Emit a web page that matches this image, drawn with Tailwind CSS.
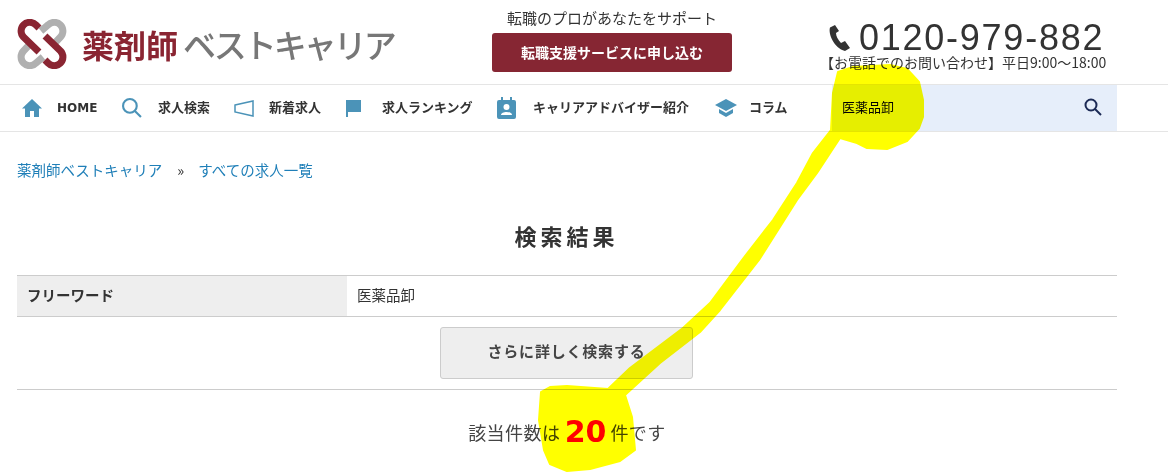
<!DOCTYPE html>
<html lang="ja">
<head>
    <meta charset="UTF-8">
    <title>薬剤師ベストキャリア</title>
    <script src="https://cdn.jsdelivr.net/npm/@tailwindcss/browser@4"></script>
</head>
<body class="relative h-[473px] overflow-hidden bg-white text-[#333] font-['DejaVu_Sans','Noto_Sans_CJK_JP',sans-serif]">
    <!-- Header -->
    <header class="h-[85px] border-b border-[#e5e5e5] flex font-['Noto_Sans_CJK_JP',sans-serif]">
        <div class="w-[430px] pl-[17px] pt-[19px] flex items-start">
            <svg class="w-[50px] h-[50px] shrink-0" viewBox="0 0 50 50" fill="none" stroke-width="7">
                <path d="M24 12 L31 6 A8.500 8.500 0 0 1 43.500 18 L36 26" stroke="#b0b0b0"/>
                <path d="M14 24 L6.500 32 A8.500 8.500 0 0 0 19 44 L26 38" stroke="#b0b0b0"/>
                <path d="M22 9 L19 6 A8.500 8.500 0 0 0 6.500 18 L22 33" stroke="#8a2532"/>
                <path d="M28 41 L31 44 A8.500 8.500 0 0 0 43.500 32 L28 17" stroke="#8a2532"/>
            </svg>
            <div class="ml-[15px] flex items-center h-[50px] leading-none font-bold whitespace-nowrap">
                <span class="text-[32px] text-[#8a2532]">薬剤師</span><span class="ml-[5px] text-[33px] tracking-[-3px] font-medium text-[#777]">ベストキャリア</span>
            </div>
        </div>
        <div class="w-[392px] flex flex-col items-center -ml-[14px] pt-[9px]">
            <p class="text-[15px] leading-[18px] text-[#333]">転職のプロがあなたをサポート</p>
            <a class="mt-[6px] w-[240px] h-[39px] rounded-[3px] bg-[#862633] text-white text-[14px] font-bold flex items-center justify-center">転職支援サービスに申し込む</a>
        </div>
        <div class="flex-1 pl-[16px] pt-[20px]">
            <div class="flex items-center h-[36px]">
                <svg class="w-[24px] h-[28px] ml-[4px]" viewBox="0 0 24 28" fill="#333"><path d="M7 1 L2 3.500 C0 10 6 24 17 27 L22 24 L17 17 L13 19 C10 16 8 12 8 9 L11 7 Z"/></svg>
                <span class="ml-[7px] text-[36px] leading-none tracking-[1.750px] text-[#333] font-['Liberation_Sans',sans-serif]">0120-979-882</span>
            </div>
            <p class="-mt-[2px] text-[14px] leading-[16px] text-[#333] whitespace-nowrap -ml-[4px]">【お電話でのお問い合わせ】平日9:00～18:00</p>
        </div>
    </header>

    <!-- Nav -->
    <nav class="h-[47px] border-b border-[#e5e5e5] pl-[17px] flex items-center text-[13px] font-bold text-[#333] whitespace-nowrap font-['Noto_Sans_CJK_JP',sans-serif]">
        <div class="flex items-center w-[815px] h-full">
            <div class="flex items-center w-[104px]">
                <svg class="w-[20px] h-[18px] ml-[5px]" viewBox="0 0 20 18" fill="#4b93b8"><path d="M10 0 L20 9.500 H17 V18 H12 V12 H8 V18 H3 V9.500 H0 Z"/></svg>
                <span class="ml-[15px] text-[12px] font-['DejaVu_Sans',sans-serif]">HOME</span>
            </div>
            <div class="flex items-center w-[112px]">
                <svg class="w-[20px] h-[20px] ml-[1px]" viewBox="0 0 19 19" fill="none" stroke="#4b93b8" stroke-width="2"><circle cx="7.500" cy="7.500" r="6.500"/><path d="M12 12 L18 18"/></svg>
                <span class="ml-[16px] mb-[2px]">求人検索</span>
            </div>
            <div class="flex items-center w-[113px]">
                <svg class="w-[20px] h-[17px] ml-[1px]" viewBox="0 0 20 17" fill="none" stroke="#4b93b8" stroke-width="1.500"><path d="M1 5 L19 1 V16 L1 12 Z"/></svg>
                <span class="ml-[15px] mb-[2px]">新着求人</span>
            </div>
            <div class="flex items-center w-[151px]">
                <svg class="w-[16px] h-[17px]" viewBox="0 0 16 17" fill="#4b93b8"><path d="M0 0 H15 V12 H2 V17 H0 Z"/></svg>
                <span class="ml-[20px] mb-[2px]">求人ランキング</span>
            </div>
            <div class="flex items-center w-[218px]">
                <svg class="w-[19px] h-[22px]" viewBox="0 0 19 22"><path fill="#4b93b8" d="M2 3 H4 V0 H6 V3 H13 V0 H15 V3 H17 A2 2 0 0 1 19 5 V20 A2 2 0 0 1 17 22 H2 A2 2 0 0 1 0 20 V5 A2 2 0 0 1 2 3 Z"/><circle cx="9.500" cy="10" r="3" fill="#fff"/><path fill="#fff" d="M4 18 C4 14 15 14 15 18 Z"/></svg>
                <span class="ml-[17px] mb-[2px]">キャリアアドバイザー紹介</span>
            </div>
            <div class="flex items-center">
                <svg class="w-[22px] h-[18px]" viewBox="0 0 22 18" fill="#4b93b8"><path d="M11 0 L22 6 L11 12 L0 6 Z"/><path d="M4 10 L11 14 L18 10 V14 L11 18 L4 14 Z"/></svg>
                <span class="ml-[12px] mb-[2px]">コラム</span>
            </div>
        </div>
        <div class="w-[285px] h-full bg-[#e6eefa] flex items-center justify-between pl-[10px] pr-[15px] font-normal text-black">
            <span class="mb-[2px]">医薬品卸</span>
            <svg class="w-[18px] h-[18px] mb-[2px]" viewBox="0 0 18 18" fill="none" stroke="#1c2a55" stroke-width="2"><circle cx="7" cy="7" r="5.500"/><path d="M11 11 L17 17"/></svg>
        </div>
    </nav>

    <!-- Main -->
    <main class="px-[17px] w-[1134px]">
        <div class="pt-[28px] flex text-[14.500px] leading-[20px] text-[#1f7fb8] font-['Noto_Sans_CJK_JP',sans-serif]">
            <a>薬剤師ベストキャリア</a><span class="ml-[15px] mr-[14px] text-[#333]">»</span><a>すべての求人一覧</a>
        </div>
        <h1 class="mt-[40px] -ml-[1px] text-center text-[22px] leading-[30px] font-bold tracking-[4px] text-[#333] font-['Noto_Sans_CJK_JP',sans-serif]">検索結果</h1>
        <div class="mt-[25px] flex h-[42px] border-y border-[#ccc] text-[14.500px] font-['Noto_Sans_CJK_JP',sans-serif]">
            <div class="w-[330px] bg-[#eee] pl-[10px] pb-[2px] flex items-center font-bold">フリーワード</div>
            <div class="pl-[10px] pb-[2px] flex items-center">医薬品卸</div>
        </div>
        <div class="py-[10px] border-b border-[#ccc] flex justify-center">
            <button class="w-[253px] h-[52px] -ml-px pb-[4px] rounded-[3px] border border-[#ccc] bg-[#eee] text-[15px] font-bold tracking-[0.800px] text-[#444] font-['Noto_Sans_CJK_JP',sans-serif]">さらに詳しく検索する</button>
        </div>
        <p class="mt-[21px] flex items-center justify-center text-[18px] leading-[42px] tracking-[0.500px] text-[#444] font-['Noto_Sans_CJK_JP',sans-serif]">
            該当件数は<span class="mx-[4px] text-[30px] tracking-normal font-bold text-[#f00] font-['DejaVu_Sans',sans-serif]">20</span>件です
        </p>
    </main>

    <!-- Hand-drawn highlight over the page -->
    <svg class="absolute left-0 top-0 w-[1168px] h-[473px] mix-blend-multiply pointer-events-none" viewBox="0 0 1168 473" fill="#ff0" stroke="#ff0" stroke-width="2" stroke-linejoin="round">
        <path d="M838 72 L853 67 L890 65 L907 69 L919 82 L923 100 L923 117 L919 128 L907 141 L887 149 L867 148 L857 143 L840 138 L817 173 L797 200 L759 260 L720 310 L700 332 L660 363 L625 395 L632 417 L635 450 L620 461 L590 469 L567 471 L550 464 L544 450 L539 420 L541 392 L550 387 L567 386 L608 389 L630 368 L683 328 L710 303 L742 260 L773 220 L797 183 L813 153 L831 130 L833 93 Z"/>
    </svg>
</body>
</html>
